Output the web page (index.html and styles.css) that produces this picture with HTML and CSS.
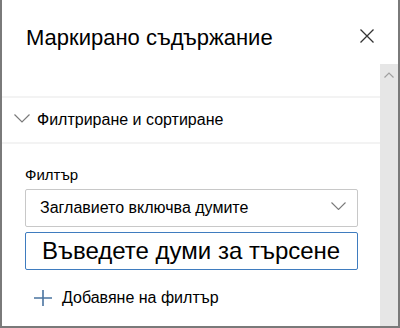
FILE: index.html
```html
<!DOCTYPE html>
<html lang="bg">
<head>
    <meta charset="UTF-8">
    <meta name="viewport" content="width=device-width, initial-scale=1.0">
    <title>Маркирано съдържание</title>
    <link rel="stylesheet" href="styles.css">
</head>
<body>

    <div class="panel">
        <div class="panel-header">
            <h1>Маркирано съдържание</h1>
            <button class="close-button" title="Затвори">
                <svg width="14" height="14" viewBox="0 0 14 14">
                    <path d="M0.5 0.5 L13.5 13.5 M13.5 0.5 L0.5 13.5" stroke="#333" stroke-width="1.3" fill="none"/>
                </svg>
            </button>
        </div>

        <div class="panel-body">
            <div class="panel-content">
                <div class="section-header">
                    <svg class="chevron" width="16" height="9" viewBox="0 0 16 9">
                        <path d="M0.5 0.5 L8 8 L15.5 0.5" stroke="#7a7a7a" stroke-width="1.2" fill="none"/>
                    </svg>
                    <span>Филтриране и сортиране</span>
                </div>

                <div class="section-body">
                    <label class="field-label">Филтър</label>
                    <div class="dropdown">
                        <span>Заглавието включва думите</span>
                        <svg width="15" height="8" viewBox="0 0 15 8">
                            <path d="M0.5 0.5 L7.5 7.5 L14.5 0.5" stroke="#7a7a7a" stroke-width="1.1" fill="none"/>
                        </svg>
                    </div>
                    <input type="text" class="search-input" placeholder="Въведете думи за търсене">
                    <div class="add-filter">
                        <svg width="18" height="16" viewBox="0 0 18 16">
                            <path d="M9 0 L9 16 M0 8 L18 8" stroke="#4a74a0" stroke-width="1.6" fill="none"/>
                        </svg>
                        <span>Добавяне на филтър</span>
                    </div>
                </div>
            </div>

            <!-- Лента за превъртане -->
            <div class="scrollbar">
                <svg width="10" height="6" viewBox="0 0 10 6">
                    <path d="M0.5 5.5 L5 1 L9.5 5.5" stroke="#a0a0a0" stroke-width="1.2" fill="none"/>
                </svg>
            </div>
        </div>
    </div>

</body>
</html>
```

FILE: styles.css
```css
/* Основни стилове */
body {
    margin: 0;
    padding: 0;
    font-family: "Liberation Sans", Arial, sans-serif;
    color: #000;
    background-color: #fff;
}

.panel {
    width: 400px;
    height: 328px;
    box-sizing: border-box;
    border-left: 2px solid #7a7a7a;
    border-right: 2px solid #7a7a7a;
    border-bottom: 2px solid #7a7a7a;
    display: flex;
    flex-direction: column;
    overflow: hidden;
}

/* Заглавие на панела */
.panel-header {
    height: 64px;
    flex-shrink: 0;
    display: flex;
    align-items: flex-start;
    justify-content: space-between;
    padding: 0 24px 0 24px;
}

.panel-header h1 {
    margin: 0;
    padding-top: 26px;
    font-size: 22px;
    font-weight: normal;
    line-height: 24px;
}

.close-button {
    margin-top: 29px;
    padding: 0;
    border: none;
    background: none;
    width: 14px;
    height: 14px;
    cursor: pointer;
}

.close-button svg {
    display: block;
}

.panel-body {
    flex: 1;
    display: flex;
}

.panel-content {
    flex: 1;
    padding-top: 32px;
}

/* Секция филтри */
.section-header {
    height: 44px;
    border-top: 2px solid #f3f3f3;
    border-bottom: 2px solid #f3f3f3;
    display: flex;
    align-items: center;
    padding-left: 12px;
    font-size: 16px;
}

.section-header .chevron {
    margin-right: 7px;
    margin-top: -3px;
}

.section-body {
    padding: 21px 22px 0 23px;
}

.field-label {
    display: block;
    font-size: 15px;
    line-height: 20px;
    margin-bottom: 4px;
}

.dropdown {
    height: 36px;
    border: 1px solid #c8c8c8;
    border-radius: 2px;
    display: flex;
    align-items: center;
    justify-content: space-between;
    padding: 0 11px 0 14px;
    font-size: 16px;
    margin-bottom: 5px;
}

.dropdown svg {
    margin-top: -4px;
}

.search-input {
    display: block;
    width: 100%;
    box-sizing: border-box;
    height: 38px;
    border: 1px solid #3f7cbf;
    border-radius: 2px;
    padding: 0 14px 0 16px;
    font-family: "Liberation Sans", Arial, sans-serif;
    font-size: 24px;
    outline: none;
}

.search-input::placeholder {
    color: #000;
}

.add-filter {
    display: flex;
    align-items: center;
    margin-top: 19px;
    padding-left: 9px;
    font-size: 16px;
}

.add-filter svg {
    margin-right: 10px;
}

/* Лента за превъртане */
.scrollbar {
    width: 18px;
    background-color: #e6e6e6;
    display: flex;
    justify-content: center;
    padding-top: 8px;
    box-sizing: border-box;
}

.scrollbar svg {
    display: block;
}
```
